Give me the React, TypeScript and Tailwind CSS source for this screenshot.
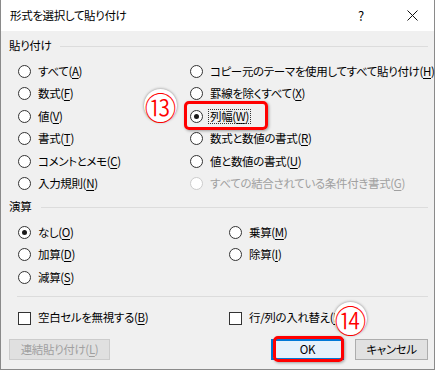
import React from 'react';

type Opt = { label: string; key: string; checked?: boolean; disabled?: boolean; focus?: boolean };

const pasteLeft: Opt[] = [
  { label: 'すべて', key: 'A' },
  { label: '数式', key: 'F' },
  { label: '値', key: 'V' },
  { label: '書式', key: 'T' },
  { label: 'コメントとメモ', key: 'C' },
  { label: '入力規則', key: 'N' },
];

const pasteRight: Opt[] = [
  { label: 'コピー元のテーマを使用してすべて貼り付け', key: 'H' },
  { label: '罫線を除くすべて', key: 'X' },
  { label: '列幅', key: 'W', checked: true, focus: true },
  { label: '数式と数値の書式', key: 'R' },
  { label: '値と数値の書式', key: 'U' },
  { label: 'すべての結合されている条件付き書式', key: 'G', disabled: true },
];

const opsLeft: Opt[] = [
  { label: 'なし', key: 'O', checked: true },
  { label: '加算', key: 'D' },
  { label: '減算', key: 'S' },
];

const opsRight: Opt[] = [
  { label: '乗算', key: 'M' },
  { label: '除算', key: 'I' },
];

function Label({ o }: { o: Opt }) {
  return (
    <span
      className={`whitespace-nowrap ${o.disabled ? 'text-[#a0a0a0]' : 'text-black'} ${
        o.focus ? 'outline-1 outline-dotted outline-[#333] outline-offset-[1px]' : ''
      }`}
    >
      {o.label}(<span className="underline underline-offset-2">{o.key}</span>)
    </span>
  );
}

function Radio({ o }: { o: Opt }) {
  return (
    <div className="h-[22.5px] flex items-center gap-[7px]">
      <span
        className={`w-[13px] h-[13px] rounded-full border bg-white flex items-center justify-center shrink-0 ${
          o.disabled ? 'border-[#cccccc]' : 'border-[#333333]'
        }`}
      >
        {o.checked && <span className="w-[5px] h-[5px] rounded-full bg-[#1a1a1a]" />}
      </span>
      <Label o={o} />
    </div>
  );
}

function Check({ label, k }: { label: string; k: string }) {
  return (
    <div className="h-[22px] flex items-center gap-[7px]">
      <span className="w-[13px] h-[13px] border border-[#333333] bg-white shrink-0" />
      <span className="whitespace-nowrap">
        {label}(<span className="underline underline-offset-2">{k}</span>)
      </span>
    </div>
  );
}

function Badge({ n, className }: { n: string; className: string }) {
  return (
    <div
      className={`absolute w-[33px] h-[33px] rounded-full bg-white flex items-center justify-center shadow-[0_0_3px_rgba(0,0,0,0.45)] ${className}`}
    >
      <span className="text-[32px] leading-none text-[#ff0000] font-light tracking-normal">{n}</span>
    </div>
  );
}

export default function App() {
  return (
    <div className="relative w-[436px] h-[371px] bg-white overflow-hidden text-[11.5px] leading-none text-black font-['Noto_Sans_CJK_JP',sans-serif] [font-feature-settings:'palt'] tracking-[-0.35px]">
      <div className="w-[435px] h-[370px] border-l border-r border-b border-[#8a8a8a] flex flex-col">
        {/* Title bar */}
        <div className="h-[31px] bg-white flex items-center pl-[9px] shrink-0">
          <span className="text-[11.5px]">形式を選択して貼り付け</span>
          <span className="ml-auto w-[14px] text-center text-[13px] mr-[39px]">?</span>
          <svg width="11" height="11" viewBox="0 0 11 11" className="mr-[16px]">
            <path d="M0.5 0.5 L10.5 10.5 M10.5 0.5 L0.5 10.5" stroke="#111" strokeWidth="1" />
          </svg>
        </div>

        {/* Body */}
        <div className="flex-1 bg-[#f0f0f0] flex flex-col">
          <div className="mt-[7px] h-[16px] flex items-center pl-[8px] pr-[6px] gap-[9px]">
            <span>貼り付け</span>
            <div className="flex-1 h-px bg-[#dcdcdc]" />
          </div>
          <div className="mt-[6px] pl-[17px] grid grid-cols-[172px_1fr]">
            <div>
              {pasteLeft.map((o) => (
                <Radio key={o.key} o={o} />
              ))}
            </div>
            <div>
              {pasteRight.map((o) => (
                <Radio key={o.key} o={o} />
              ))}
            </div>
          </div>

          <div className="mt-[4px] h-[16px] flex items-center pl-[8px] pr-[6px] gap-[10px]">
            <span>演算</span>
            <div className="flex-1 h-px bg-[#dcdcdc]" />
          </div>
          <div className="mt-[6px] pl-[17px] grid grid-cols-[211px_1fr]">
            <div>
              {opsLeft.map((o) => (
                <Radio key={o.key} o={o} />
              ))}
            </div>
            <div>
              {opsRight.map((o) => (
                <Radio key={o.key} o={o} />
              ))}
            </div>
          </div>

          <div className="mt-[7.5px] mx-[16px] mr-[6px] h-px bg-[#dcdcdc]" />

          <div className="mt-[10px] pl-[17px] grid grid-cols-[211px_1fr]">
            <Check label="空白セルを無視する" k="B" />
            <Check label="行/列の入れ替え" k="E" />
          </div>

          <div className="mt-[10px] pl-[8px] pr-[6px] flex items-center">
            <div className="w-[101px] h-[21px] border border-[#cccccc] bg-[#e0e0e0] text-[#a0a0a0] flex items-center justify-center">
              <span className="whitespace-nowrap">
                連結貼り付け(<span className="underline underline-offset-2">L</span>)
              </span>
            </div>
            <div className="ml-auto flex gap-[11px]">
              <div className="w-[73px] h-[21px] border-2 border-[#0078d7] bg-[#e5f1fb] flex items-center justify-center">
                OK
              </div>
              <div className="w-[73px] h-[21px] border border-[#adadad] bg-[#e1e1e1] flex items-center justify-center">
                キャンセル
              </div>
            </div>
          </div>
        </div>
      </div>

      {/* Annotations */}
      <div className="absolute left-[184px] top-[101px] w-[84px] h-[29px] border-[3px] border-[#ff0000] rounded-[5px] shadow-[1px_1px_3px_rgba(0,0,0,0.35)]" />
      <div className="absolute left-[273px] top-[336px] w-[71px] h-[26px] border-[3px] border-[#ff0000] rounded-[5px] shadow-[1px_1px_3px_rgba(0,0,0,0.35)]" />
      <Badge n="⑬" className="left-[144px] top-[89px]" />
      <Badge n="⑭" className="left-[334px] top-[302px]" />
    </div>
  );
}
